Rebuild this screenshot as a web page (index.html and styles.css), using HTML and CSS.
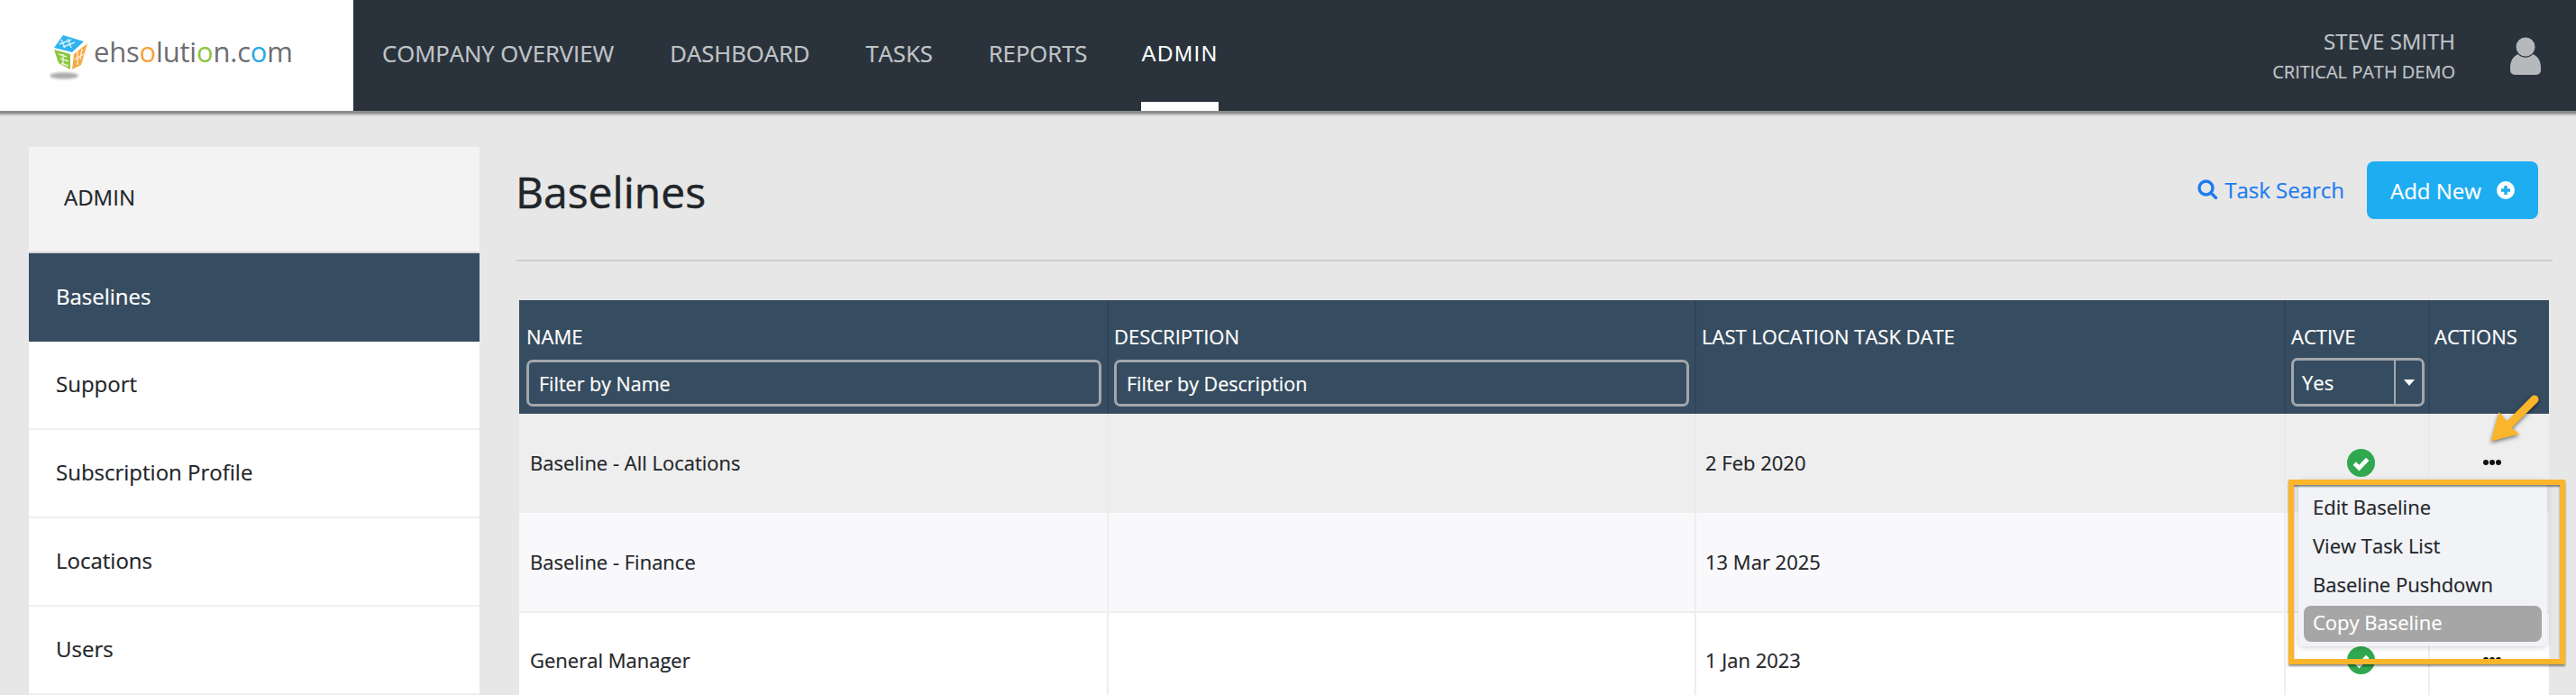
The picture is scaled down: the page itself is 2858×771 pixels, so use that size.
FILE: index.html
```html
<!DOCTYPE html>
<html lang="en">
<head>
<meta charset="utf-8">
<title>Baselines</title>
<link rel="stylesheet" href="styles.css">
</head>
<body>
<header class="topbar">
  <div class="logo">
    <svg class="logo-cube" viewBox="55 35 48 56" aria-hidden="true">
      <ellipse class="cube-shadow" cx="71" cy="84" rx="16" ry="3.5"/>
      <path class="face-blue" d="M60 53 70 39 93 46 80 58Z"/>
      <path class="face-green" d="M60 55 78 60V77L65 70Z"/>
      <path class="face-orange" d="M82 60 97 48 90 72 80 77Z"/>
      <path class="cube-marks" d="M68 44l4 9M75 43l4 10M66 49l13-5M70 52l13-5M65 60l9 3M67 65l9 3M68 70l8 3M70 60v12M86 57v15M91 54l-2 12M83 66l10-6"/>
    </svg>
    <span class="logo-text">ehs<span class="o1">o</span>luti<span class="o2">o</span>n.c<span class="o3">o</span>m</span>
  </div>
  <nav class="mainnav">
    <a class="navlink">COMPANY OVERVIEW</a>
    <a class="navlink">DASHBOARD</a>
    <a class="navlink">TASKS</a>
    <a class="navlink">REPORTS</a>
    <a class="navlink active">ADMIN</a>
  </nav>
  <div class="userbox">
    <div class="username">
      <div class="name">STEVE SMITH</div>
      <div class="org">CRITICAL PATH DEMO</div>
    </div>
    <svg class="usericon" viewBox="0 0 34 42" aria-hidden="true">
      <circle cx="17" cy="11" r="10.5"/>
      <path d="M0 34C0 26 4 21 9 19 12 24 22 24 25 19 30 21 34 26 34 34V37A5 5 0 0 1 29 42H5A5 5 0 0 1 0 37Z"/>
    </svg>
  </div>
</header>

<main class="page">
  <aside class="sidebar">
    <div class="side-title">ADMIN</div>
    <a class="side-item current">Baselines</a>
    <a class="side-item">Support</a>
    <a class="side-item">Subscription Profile</a>
    <a class="side-item">Locations</a>
    <a class="side-item">Users</a>
  </aside>

  <section class="content">
    <div class="content-head">
      <h1>Baselines</h1>
      <div class="head-actions">
        <a class="task-search">
          <svg class="search-icon" viewBox="0 0 22 22" aria-hidden="true"><circle cx="9.5" cy="9.5" r="7.5"/><path d="M15 15l5.5 5.5"/></svg>
          Task Search
        </a>
        <a class="add-new">Add New
          <svg class="plus-icon" viewBox="0 0 20 20" aria-hidden="true"><circle cx="10" cy="10" r="10"/><path d="M10 5v10M5 10h10"/></svg>
        </a>
      </div>
    </div>

    <div class="table-wrap">
      <table class="grid">
        <colgroup>
          <col class="c-name"><col class="c-desc"><col class="c-date"><col class="c-active"><col class="c-actions">
        </colgroup>
        <thead>
          <tr>
            <th><div class="th-label">NAME</div><input class="filter" placeholder="Filter by Name"></th>
            <th><div class="th-label">DESCRIPTION</div><input class="filter" placeholder="Filter by Description"></th>
            <th><div class="th-label">LAST LOCATION TASK DATE</div></th>
            <th><div class="th-label">ACTIVE</div>
              <div class="select"><span class="select-value">Yes</span><span class="select-btn"><i class="caret"></i></span></div>
            </th>
            <th><div class="th-label">ACTIONS</div></th>
          </tr>
        </thead>
        <tbody>
          <tr class="row-hover">
            <td>Baseline - All Locations</td><td></td><td>2 Feb 2020</td>
            <td class="cell-check"><svg class="check" viewBox="0 0 30 30" aria-hidden="true"><circle cx="15" cy="15" r="15"/><path d="M8 15.5l5 5 9-9.5"/></svg></td>
            <td class="cell-dots"><span class="dots"><i></i><i></i><i></i></span></td>
          </tr>
          <tr class="row-alt">
            <td>Baseline - Finance</td><td></td><td>13 Mar 2025</td><td></td><td></td>
          </tr>
          <tr class="row-plain">
            <td>General Manager</td><td></td><td>1 Jan 2023</td>
            <td class="cell-check"><svg class="check" viewBox="0 0 30 30" aria-hidden="true"><circle cx="15" cy="15" r="15"/><path d="M8 15.5l5 5 9-9.5"/></svg></td>
            <td class="cell-dots"><span class="dots"><i></i><i></i><i></i></span></td>
          </tr>
        </tbody>
      </table>

      <ul class="menu">
        <li>Edit Baseline</li>
        <li>View Task List</li>
        <li>Baseline Pushdown</li>
        <li class="hovered">Copy Baseline</li>
      </ul>
      <div class="callout-box"></div>
      <svg class="callout-arrow" viewBox="0 0 100 100" aria-hidden="true">
        <path class="arrow-shaft" d="M72 13 42 43"/>
        <path class="arrow-head" d="M23.5 59.5 32.5 27 41 37 47 45 55 51.5Z"/>
      </svg>
    </div>
  </section>
</main>
</body>
</html>
```

FILE: styles.css
```css
* { box-sizing: border-box; }
html, body { margin: 0; height: 771px; overflow: hidden; }
body { background: #e7e7e7; font-family: "Open Sans", "Noto Sans", sans-serif; color: #1f2529; font-size: 22px; -webkit-text-stroke: .2px; }

.topbar { display: flex; height: 126px; background: #2a333c; border-bottom: 3px solid #8b8b8b; box-shadow: 0 2px 1px #bcbcbc; }
.logo { width: 392px; flex: none; background: #fff; display: flex; align-items: flex-start; padding: 35px 0 0 55px; }
.logo-cube { width: 48px; height: 56px; flex: none; }
.cube-shadow { fill: #a9a9a9; filter: blur(1.5px); }
.face-blue { fill: #2fb4ee; }
.face-green { fill: #8cc63f; }
.face-orange { fill: #f7a845; }
.cube-marks { fill: none; stroke: #fff; stroke-width: 1.4; opacity: .8; }
.logo-text { font-size: 31px; line-height: 44px; color: #6d6e71; margin-left: 1px; letter-spacing: -.2px; -webkit-text-stroke: 0; }
.o1 { color: #f7a13b; }
.o2 { color: #8cc63f; }
.o3 { color: #29abe2; }

.mainnav { display: flex; gap: 62px; padding-left: 32px; flex: 1; }
.navlink { display: flex; align-items: center; padding-top: 6px; border-bottom: 10px solid transparent; font-size: 25.7px; color: #c2c5c8; }
.navlink.active { margin-left: -2px; color: #fff; border-bottom-color: #fff; font-family: "Liberation Sans", sans-serif; font-size: 24px; letter-spacing: 1.6px; -webkit-text-stroke: 0; }

.userbox { display: flex; align-items: flex-start; padding: 29px 39px 0 0; }
.username { text-align: right; color: #c2c5c8; margin-right: 61px; }
.name { font-size: 24px; line-height: 34px; }
.org { font-size: 20px; line-height: 34px; }
.usericon { width: 34px; height: 42px; margin-top: 12px; fill: #b5b9bc; }

.page { display: flex; padding: 37px 0 0 32px; }
.sidebar { width: 500px; flex: none; background: #fff; }
.side-title { height: 118px; background: #f3f3f3; border-bottom: 2px solid #d6d6d6; padding: 40px 0 0 39px; line-height: 32px; font-size: 24px; }
.side-item { display: flex; align-items: center; height: 98px; padding: 0 0 3px 30px; font-size: 24px; border-bottom: 2px solid #efefef; }
.side-item.current { background: #364c60; color: #fff; border-bottom: none; }

.content { width: 2259px; margin-left: 41px; }
.content-head { display: flex; justify-content: space-between; height: 127px; border-bottom: 2px solid #cdcdcd; }
h1 { margin: 18px 0 0 -1px; font-size: 48px; font-weight: 400; line-height: 64px; color: #1f2529; -webkit-text-stroke: .5px #1f2529; }
.head-actions { display: flex; align-items: center; gap: 25px; height: 64px; margin: 16px 16px 0 0; }
.task-search { display: flex; align-items: center; gap: 8px; padding-bottom: 2px; color: #1c7cf0; font-size: 24px; }
.search-icon { width: 22px; height: 22px; fill: none; stroke: #1c7cf0; stroke-width: 3.4; stroke-linecap: round; }
.add-new { display: flex; align-items: center; justify-content: space-between; width: 190px; height: 64px; padding: 0 26px; background: #1fadf2; color: #fff; border-radius: 8px; font-size: 24px; }
.plus-icon { width: 20px; height: 20px; fill: #fff; }
.plus-icon path { fill: none; stroke: #1fadf2; stroke-width: 3.4; }

.table-wrap { position: relative; margin: 43px 0 0 3px; }
.grid { border-collapse: collapse; table-layout: fixed; width: 2252px; font-size: 22px; }
.c-name { width: 653px; }
.c-desc { width: 652px; }
.c-date { width: 654px; }
.c-active { width: 160px; }
.c-actions { width: 133px; }
thead tr { background: #364c60; }
th { height: 126px; padding: 24px 6px 0 6px; text-align: left; vertical-align: top; font-weight: 400; color: #fff; border-left: 2px solid #30455a; }
th:first-child { border-left: none; padding-left: 8px; }
th:last-child { padding-left: 5px; }
.th-label { line-height: 32px; height: 42px; }
.filter { display: block; width: 100%; height: 52px; padding: 0 11px; background: transparent; border: 3px solid #a3a7aa; border-radius: 7px; font: 21.5px "Open Sans", sans-serif; color: #fff; }
.filter::placeholder { color: #fff; opacity: 1; }
.select { display: flex; width: 148px; height: 54px; margin-top: -2px; border: 3px solid #a3a7aa; border-radius: 7px; color: #fff; }
.select-value { flex: 1; padding-left: 9px; line-height: 48px; font-size: 22px; }
.select-btn { width: 31px; display: flex; align-items: center; justify-content: center; border-left: 2px solid #a3a7aa; }
.caret { border: 6px solid transparent; border-top: 7px solid #fff; border-bottom: none; }

td { padding: 0 0 0 10px; vertical-align: middle; border-left: 2px solid #eeeeee; }
td:first-child { border-left: none; padding-left: 12px; }
td.cell-check { padding-left: 8px; }
td.cell-dots { padding-left: 5px; }
.row-hover { height: 110px; background: #eeeeee; }
.row-hover td { border-left-color: #ebebeb; padding-bottom: 2px; }
.row-alt { height: 110px; background: #f9f9fb; border-bottom: 2px solid #eeeeee; }
.row-alt td { padding-bottom: 2px; }
.row-plain { height: 110px; background: #fff; }
.row-plain td { padding-bottom: 5px; }
.check { display: block; width: 31px; height: 31px; margin: 0 auto; fill: #2fa84f; stroke: none; }
.check path { fill: none; stroke: #fff; stroke-width: 4.6; }
.dots { display: flex; justify-content: center; gap: 1px; }
.dots i { width: 6px; height: 6px; border-radius: 50%; background: #111; }

.menu { position: absolute; left: 1974px; top: 200px; width: 276px; height: 184px; margin: 0; padding: 8px 6px; list-style: none; background: #f2f3f6; border-radius: 6px; box-shadow: 0 1px 6px rgba(0,0,0,.2); font-size: 22px; color: #1f2529; }
.menu li { height: 43px; padding-left: 10px; line-height: 43px; }
.menu li.hovered { height: 40px; margin-top: 2px; background: #a6a6a6; color: #fff; border-radius: 8px; line-height: 37px; }
.callout-box { position: absolute; left: 1963px; top: 199px; width: 307px; height: 205px; border: 6px solid #fbb52a; box-shadow: 0 2px 2px rgba(0,0,0,.45), inset 0 2px 2px rgba(0,0,0,.45); }
.callout-arrow { position: absolute; left: 2164px; top: 97px; width: 100px; height: 100px; filter: drop-shadow(0 2px 2px rgba(0,0,0,.5)); overflow: visible; }
.arrow-shaft { fill: none; stroke: #fbb52a; stroke-width: 9; stroke-linecap: round; }
.arrow-head { fill: #fbb52a; }
```
